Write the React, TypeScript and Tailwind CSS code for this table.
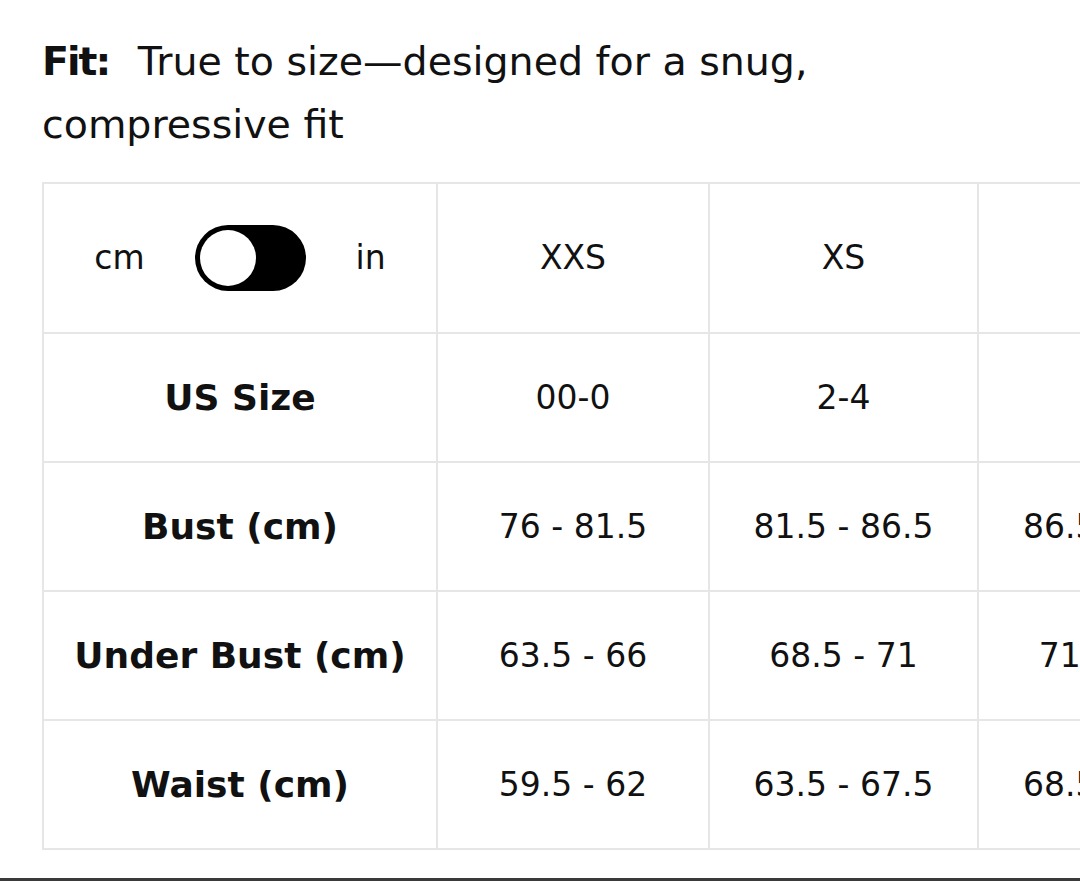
import React, { useState } from 'react';

const font = { fontFamily: '"DejaVu Sans", "Noto Sans", sans-serif' };

interface Row {
  label: string;
  values: string[];
}

const rows: Row[] = [
  { label: 'US Size', values: ['00-0', '2-4', '6-8'] },
  { label: 'Bust (cm)', values: ['76 - 81.5', '81.5 - 86.5', '86.5 - 91.5'] },
  { label: 'Under Bust (cm)', values: ['63.5 - 66', '68.5 - 71', '71 - 73.5'] },
  { label: 'Waist (cm)', values: ['59.5 - 62', '63.5 - 67.5', '68.5 - 72.5'] },
];

const cellBase = 'flex items-center justify-center border-r-2 border-b-2 border-[#e6e6e6] whitespace-nowrap';

export default function App() {
  const [inches, setInches] = useState(false);

  return (
    <div className="w-[1080px] h-[881px] bg-white overflow-hidden flex flex-col text-[#111]" style={font}>
      <div className="pl-[42px] pt-[30px]">
        <p className="text-[39.5px] leading-[63px] w-[830px]">
          <span className="font-bold tracking-[-0.05em] mr-[16px]">Fit:</span> True to size—designed for a snug, compressive fit
        </p>
      </div>

      {/* Size chart */}
      <div className="pl-[42px] mt-[26px]">
        <div className="grid grid-cols-[394px_272px_269px_270px] w-max border-l-2 border-t-2 border-[#e6e6e6]">
          <div className={`${cellBase} h-[150px] gap-[50px] text-[33px]`}>
            <span>cm</span>
            <button
              onClick={() => setInches(!inches)}
              className="w-[111px] h-[66px] rounded-full bg-black flex items-center px-[5px]"
            >
              <span className="w-[56px] h-[56px] rounded-full bg-white block" />
            </button>
            <span>in</span>
          </div>
          {['XXS', 'XS', 'S'].map((s) => (
            <div key={s} className={`${cellBase} h-[150px] text-[33px]`}>{s}</div>
          ))}

          {rows.map((r) => (
            <React.Fragment key={r.label}>
              <div className={`${cellBase} h-[129px] text-[36px] font-bold`}>{r.label}</div>
              {r.values.map((v, i) => (
                <div key={i} className={`${cellBase} h-[129px] text-[33px]`}>{v}</div>
              ))}
            </React.Fragment>
          ))}
        </div>
      </div>

      <div className="flex-1" />
      <div className="h-[3px] bg-[#3a3a3a]" />
    </div>
  );
}
